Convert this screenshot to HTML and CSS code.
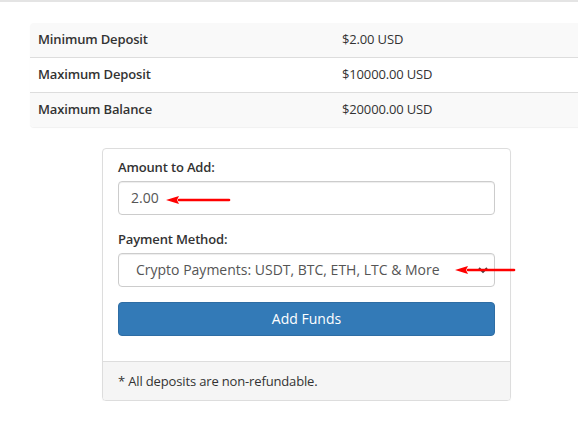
FILE: index.html
```html
<!DOCTYPE html>
<html>
<head>
<meta charset="utf-8">
<link rel="stylesheet" href="styles.css">
</head>
<body>
<div class="topbar"></div>
<table class="limits">
  <tr class="odd"><td class="lbl">Minimum Deposit</td><td>$2.00 USD</td></tr>
  <tr><td class="lbl">Maximum Deposit</td><td>$10000.00 USD</td></tr>
  <tr class="odd"><td class="lbl">Maximum Balance</td><td>$20000.00 USD</td></tr>
</table>
<div class="panel">
  <div class="panel-body">
    <div class="form-group">
      <label class="control-label">Amount to Add:</label>
      <div class="field">
        <div class="input">2.00</div>
        <svg class="arrow arrow-1" width="66" height="10" viewBox="0 0 66 10"><path d="M14 5 H64" stroke="#f00" stroke-width="2.6" stroke-linecap="round"/><path d="M1 5 L14 1 L12 5 L14 9 Z" fill="#f00"/></svg>
      </div>
    </div>
    <div class="form-group">
      <label class="control-label">Payment Method:</label>
      <div class="field">
        <div class="select">Crypto Payments: USDT, BTC, ETH, LTC &amp; More
          <svg class="chev" width="10" height="7" viewBox="0 0 10 7"><path d="M1 1 L5 5 L9 1" fill="none" stroke="#444" stroke-width="1.8"/></svg>
        </div>
        <svg class="arrow arrow-2" width="62" height="10" viewBox="0 0 62 10"><path d="M14 5 H60" stroke="#f00" stroke-width="2.6" stroke-linecap="round"/><path d="M1 5 L14 1 L12 5 L14 9 Z" fill="#f00"/></svg>
      </div>
    </div>
    <div class="btn">Add Funds</div>
  </div>
  <div class="panel-footer">* All deposits are non-refundable.</div>
</div>
</body>
</html>
```
FILE: styles.css
```css
html, body {
  margin: 0;
  padding: 0;
  overflow: hidden;
  background: #fff;
}
body {
  font-family: "Open Sans", "Liberation Sans", sans-serif;
  font-size: 13px;
  color: #333;
  line-height: 18px;
  letter-spacing: -0.15px;
}
.topbar {
  height: 2px;
  background: #e4e4e4;
}
.limits {
  margin: 21px 0 0 30px;
  width: 570px;
  border-collapse: separate;
  border-spacing: 0;
  border-radius: 4px;
  box-shadow: 0 1px 1px rgba(0,0,0,0.06);
}
.limits td {
  height: 32px;
  padding: 0 8px 2px;
  border-top: 1px solid #ddd;
  vertical-align: middle;
  white-space: nowrap;
}
.limits tr:first-child td {
  border-top: none;
}
.limits tr.odd td {
  background: #f9f9f9;
}
.limits tr:first-child td:first-child { border-top-left-radius: 4px; }
.limits tr:last-child td:first-child { border-bottom-left-radius: 4px; }
.limits td.lbl {
  width: 288px;
  font-weight: 600;
}
.panel {
  margin: 21px 0 0 102px;
  width: 407px;
  border: 1px solid #ddd;
  border-radius: 4px;
  box-shadow: 0 1px 1px rgba(0,0,0,0.05);
}
.panel-body {
  padding: 9px 15px 25px;
}
.form-group {
  margin-bottom: 15px;
}
.control-label {
  display: block;
  font-weight: 600;
  margin-bottom: 5px;
}
.field {
  position: relative;
}
.input, .select {
  position: relative;
  box-sizing: border-box;
  height: 34px;
  border: 1px solid #ccc;
  border-radius: 4px;
  font-size: 14px;
  line-height: 32px;
  color: #555;
  letter-spacing: 0;
  box-shadow: inset 0 1px 1px rgba(0,0,0,0.075);
}
.input {
  padding-left: 12px;
}
.select {
  padding-left: 17px;
  white-space: nowrap;
}
.chev {
  position: absolute;
  right: 6px;
  top: 13px;
}
.arrow {
  position: absolute;
}
.arrow-1 {
  left: 47px;
  top: 14px;
}
.arrow-2 {
  left: 336px;
  top: 12px;
}
.btn {
  box-sizing: border-box;
  height: 34px;
  background: #337ab7;
  border: 1px solid #2e6da4;
  border-radius: 4px;
  color: #fff;
  font-size: 14px;
  line-height: 32px;
  letter-spacing: 0;
  text-align: center;
}
.panel-footer {
  background: #f5f5f5;
  border-top: 1px solid #ddd;
  padding: 10px 15px;
  border-radius: 0 0 3px 3px;
}
```
